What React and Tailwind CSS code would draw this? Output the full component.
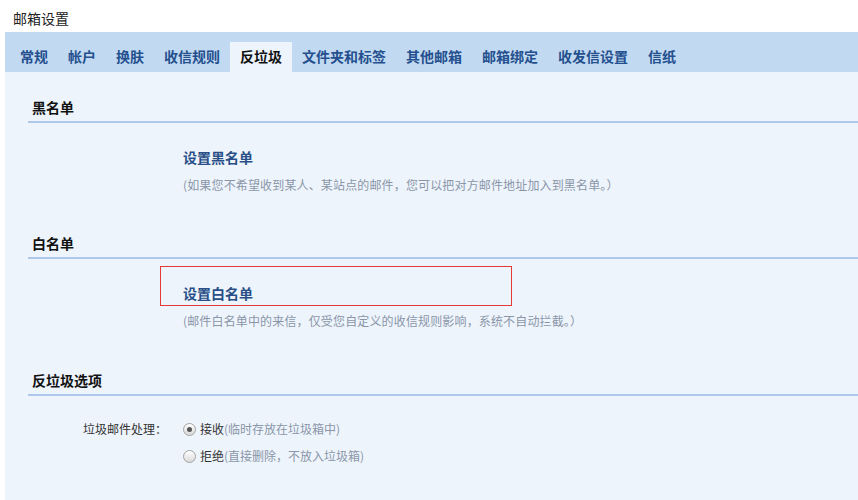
// 邮箱设置 · 反垃圾
const TABS = ["常规", "帐户", "换肤", "收信规则", "反垃圾", "文件夹和标签", "其他邮箱", "邮箱绑定", "收发信设置", "信纸"];
const ACTIVE = "反垃圾";

function SectionHead({ title, className }) {
  return (
    <div className={className}>
      <div className="pl-[4px] text-[14px] leading-[18px] font-bold text-[#111]">{title}</div>
      <div className="mt-[5px] h-[2px] bg-[#adc8eb]" />
    </div>
  );
}

function Radio({ checked }) {
  return (
    <span className="relative inline-flex w-[13px] h-[13px] shrink-0 items-center justify-center rounded-full border border-[#a3a3a3] bg-gradient-to-b from-[#ffffff] to-[#d9d9d9]">
      {checked && <span className="w-[5px] h-[5px] rounded-full bg-[#555]" />}
    </span>
  );
}

export default function App() {
  return (
    <div
      className="w-full h-[500px] bg-white overflow-hidden"
      style={{ fontFamily: '"Noto Sans CJK SC", "Noto Sans", sans-serif' }}
    >
      <div className="h-[32px] pl-[13px] pt-[9px] text-[14px] leading-[18px] text-[#222]">邮箱设置</div>

      <div className="ml-[5px] h-[40px] bg-[#c2d9f2] flex items-end pl-[5px]">
        {TABS.map((t) => (
          <div
            key={t}
            className={
              t === ACTIVE
                ? "h-[30px] px-[10px] leading-[28px] text-[14px] font-bold text-[#111] bg-[#eef4fc]"
                : "h-[30px] px-[10px] leading-[28px] text-[14px] font-bold text-[#24508e]"
            }
          >
            {t}
          </div>
        ))}
      </div>

      <div className="ml-[5px] h-[428px] bg-[#eef4fc] pl-[23px]">
        <SectionHead title="黑名单" className="pt-[26px]" />
        <div className="pl-[155px]">
          <div className="mt-[25px] text-[14px] leading-[18px] font-bold text-[#274e86]">设置黑名单</div>
          <div className="mt-[10px] text-[12px] leading-[18px] tracking-[0.15px] text-[#8a96a8]">
            (如果您不希望收到某人、某站点的邮件，您可以把对方邮件地址加入到黑名单。）
          </div>
        </div>

        <SectionHead title="白名单" className="mt-[40px]" />
        <div className="ml-[132px] mt-[7px] w-[352px] h-[40px] border border-[#e53935] pl-[22px] pt-[17px]">
          <div className="text-[14px] leading-[18px] font-bold text-[#274e86]">设置白名单</div>
        </div>
        <div className="pl-[155px] mt-[6px] text-[12px] leading-[18px] tracking-[0.15px] text-[#8a96a8]">
          (邮件白名单中的来信，仅受您自定义的收信规则影响，系统不自动拦截。）
        </div>

        <SectionHead title="反垃圾选项" className="mt-[41px]" />
        <div className="mt-[24px] flex">
          <div className="w-[155px] pr-[16px] text-right text-[12px] leading-[18px] text-[#333]">垃圾邮件处理：</div>
          <div className="flex flex-col gap-[9px]">
            <label className="flex items-center gap-[4px] text-[12px] leading-[18px]">
              <Radio checked />
              <span className="text-[#333]">接收<span className="text-[#8a96a8]">(临时存放在垃圾箱中)</span></span>
            </label>
            <label className="flex items-center gap-[4px] text-[12px] leading-[18px]">
              <Radio />
              <span className="text-[#333]">拒绝<span className="text-[#8a96a8]">(直接删除，不放入垃圾箱)</span></span>
            </label>
          </div>
        </div>
      </div>
    </div>
  );
}
